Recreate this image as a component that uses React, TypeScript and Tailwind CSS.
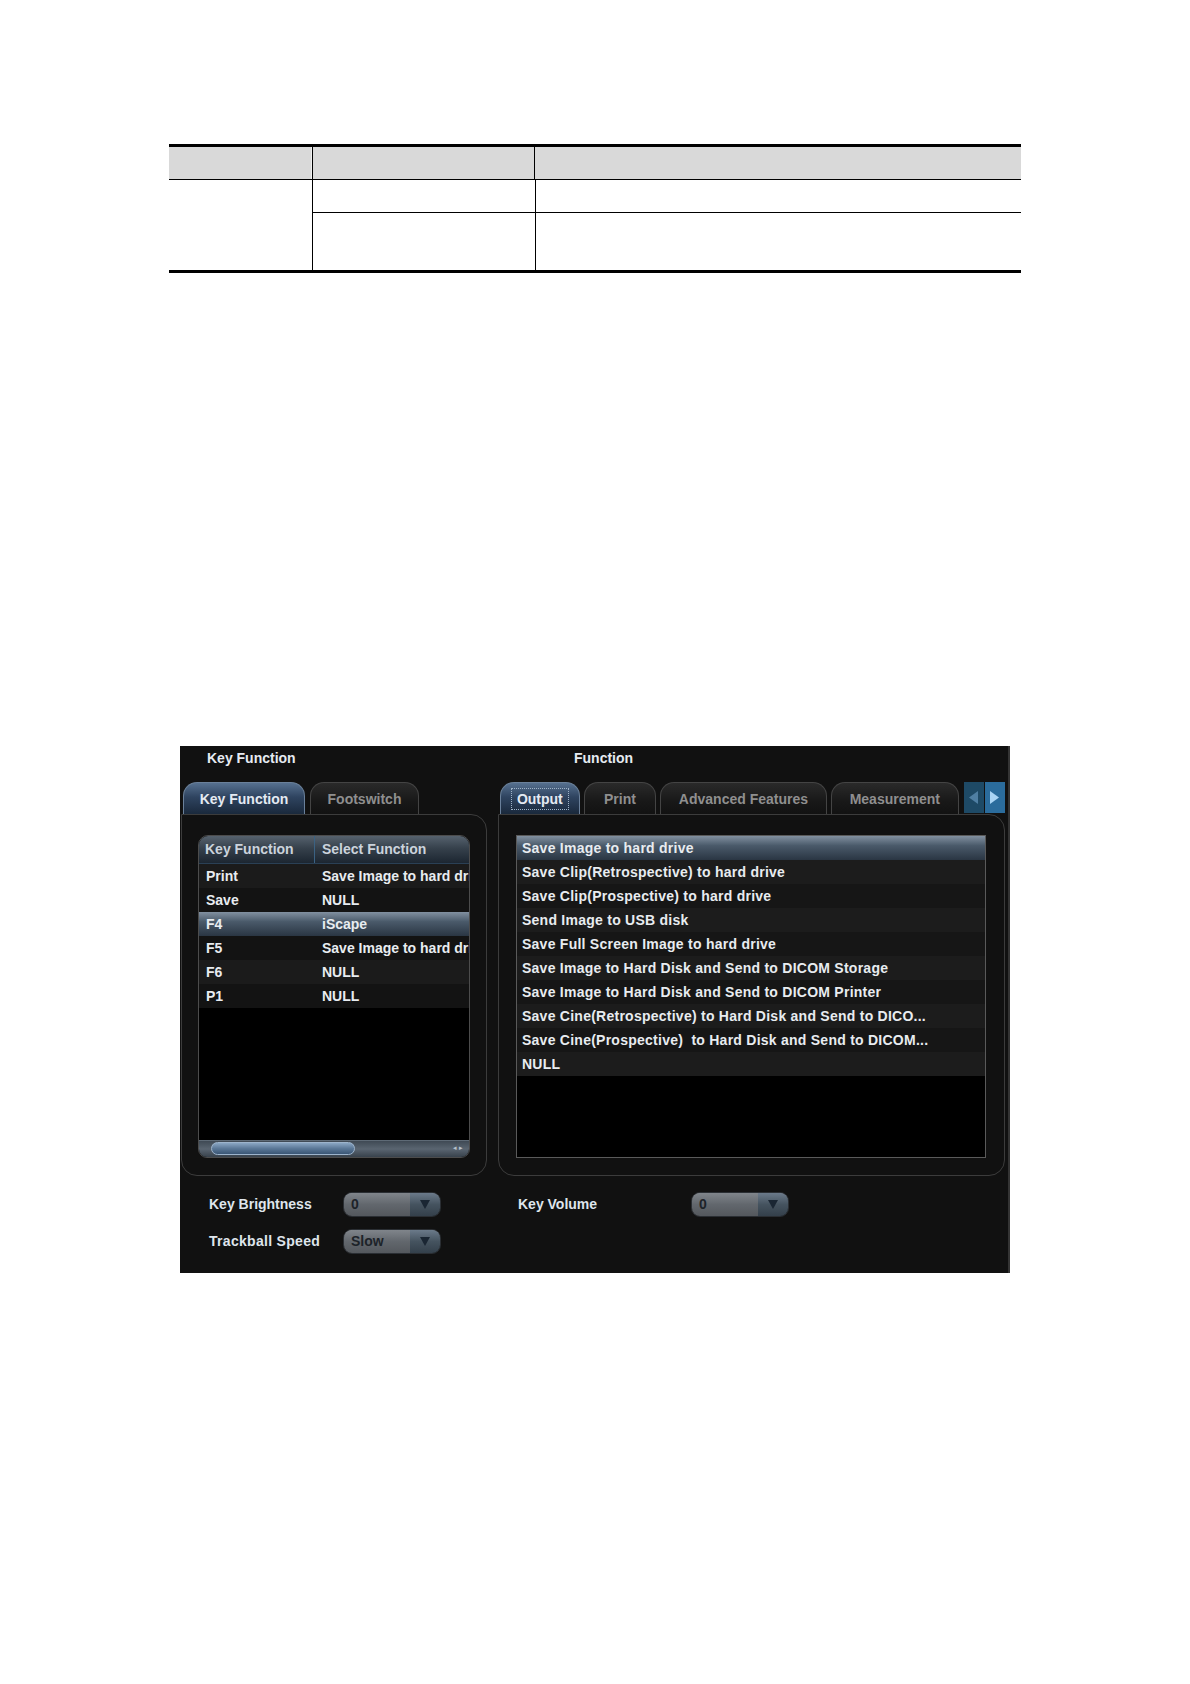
import React from "react";

const leftRows = [
  { k: "Print", v: "Save Image to hard drive" },
  { k: "Save", v: "NULL" },
  { k: "F4", v: "iScape", sel: true },
  { k: "F5", v: "Save Image to hard drive" },
  { k: "F6", v: "NULL" },
  { k: "P1", v: "NULL" },
];

const rightRows = [
  "Save Image to hard drive",
  "Save Clip(Retrospective) to hard drive",
  "Save Clip(Prospective) to hard drive",
  "Send Image to USB disk",
  "Save Full Screen Image to hard drive",
  "Save Image to Hard Disk and Send to DICOM Storage",
  "Save Image to Hard Disk and Send to DICOM Printer",
  "Save Cine(Retrospective) to Hard Disk and Send to DICO...",
  "Save Cine(Prospective)  to Hard Disk and Send to DICOM...",
  "NULL",
];

const SEL =
  "bg-[linear-gradient(to_bottom,#8190a0_0%,#4a5a6a_40%,#2a3643_100%)]";

function Tab({
  label,
  active,
  cls,
  focus,
}: {
  label: string;
  active?: boolean;
  cls: string;
  focus?: boolean;
}) {
  return (
    <div
      className={`h-[32px] flex items-center justify-center rounded-t-[14px] border border-b-0 text-[14px] font-bold ${cls} ${
        active
          ? "bg-[linear-gradient(to_bottom,#56708f_0%,#2f4460_45%,#1a293c_100%)] border-[#6a809a] text-[#e4eaf2]"
          : "bg-[linear-gradient(to_bottom,#2a2a2a_0%,#181818_60%,#121212_100%)] border-[#444] text-[#8f8f8f]"
      }`}
    >
      {focus ? (
        <span className="px-[5px] py-[2px] border border-dotted border-[#9fb3c8] leading-[16px]">
          {label}
        </span>
      ) : (
        <span className="leading-[16px]">{label}</span>
      )}
    </div>
  );
}

function Dropdown({ value }: { value: string }) {
  return (
    <div className="w-[98px] h-[25px] flex rounded-[9px] overflow-hidden border border-[#2a2e33] shadow-[inset_0_1px_0_#9aa0a6]">
      <div className="flex-1 flex items-center pl-[7px] bg-[linear-gradient(to_bottom,#80858b_0%,#62676d_50%,#54585d_100%)] text-[14px] font-bold text-[#1d2329]">
        {value}
      </div>
      <div className="w-[30px] flex items-center justify-center bg-[linear-gradient(to_bottom,#6b7a8a_0%,#45535f_50%,#34404b_100%)]">
        <svg width="10" height="9" viewBox="0 0 10 9">
          <path d="M0 0 H10 L5 9 Z" fill="#1a2633" />
        </svg>
      </div>
    </div>
  );
}

export default function App() {
  return (
    <div className="w-[1190px] min-h-[1684px] bg-white pt-[144px] font-['Liberation_Sans',Arial,sans-serif]">
      {/* top table */}
      <div className="ml-[169px] w-[852px] border-t-[3px] border-b-[3px] border-black">
        <div className="flex h-[33px] bg-[#d9d9d9] border-b border-black">
          <div className="w-[143px] border-r border-[#f0f0f0]" />
          <div className="w-[222px] border-l border-black" />
          <div className="flex-1 border-l border-black" />
        </div>
        <div className="flex">
          <div className="w-[143px]" />
          <div className="flex-1 flex flex-col border-l border-black">
            <div className="flex h-[33px] border-b border-black">
              <div className="w-[222px]" />
              <div className="flex-1 border-l border-black" />
            </div>
            <div className="flex h-[57px]">
              <div className="w-[222px]" />
              <div className="flex-1 border-l border-black" />
            </div>
          </div>
        </div>
      </div>

      {/* panel */}
      <div className="ml-[180px] mt-[473px] w-[830px] h-[527px] bg-[#111111] border-r-2 border-[#343434] flex flex-col text-[#e8ecf0]">
        <div className="flex h-[22px] items-center text-[14px] font-bold text-[#e6ebf2] mt-[1px]">
          <div className="w-[394px] pl-[27px]">Key Function</div>
          <div>Function</div>
        </div>

        <div className="flex mt-[13px] pl-[1px] gap-[11px]">
          {/* left column */}
          <div className="w-[306px] flex flex-col">
            <div className="flex h-[32px] pl-[2px] gap-[5px]">
              <Tab label="Key Function" active cls="w-[122px]" />
              <Tab label="Footswitch" cls="w-[109px]" />
            </div>
            <div className="h-[362px] border-[1.5px] border-[#3c3c3c] rounded-[16px] rounded-tl-none pt-[20px] pl-[16px]">
              <div className="w-[272px] h-[323px] border border-[#4c4c4c] rounded-t-[10px] rounded-b-[9px] bg-black flex flex-col overflow-hidden">
                <div className="h-[28px] flex shrink-0 bg-[linear-gradient(to_bottom,#56626e_0%,#36414c_45%,#1c2631_100%)] border-b border-[#2a4055] text-[14px] font-bold text-[#cbd3dc]">
                  <div className="w-[115px] shrink-0 pl-[6px] flex items-center">Key Function</div>
                  <div className="w-px shrink-0 bg-[#3b6283]" />
                  <div className="flex-1 pl-[7px] flex items-center whitespace-nowrap">Select Function</div>
                </div>
                {leftRows.map((r, i) => (
                  <div
                    key={r.k}
                    className={`h-[24px] shrink-0 flex items-center text-[14px] font-bold whitespace-nowrap overflow-hidden ${
                      r.sel ? SEL : i % 2 === 0 ? "bg-[#1b1b1b]" : "bg-[#131313]"
                    }`}
                  >
                    <div className="w-[116px] shrink-0 pl-[7px]">{r.k}</div>
                    <div className="flex-1 min-w-0 overflow-hidden pl-[7px]">{r.v}</div>
                  </div>
                ))}
                <div className="flex-1" />
                <div className="h-[17px] shrink-0 relative bg-[linear-gradient(to_bottom,#3f4954_0%,#5a6571_50%,#38424c_100%)] border-t border-[#5e6a76]">
                  <div className="absolute left-[12px] top-[1px] w-[144px] h-[13px] rounded-full border border-[#9db4cc] bg-[linear-gradient(to_bottom,#8aa6c3_0%,#5b7897_50%,#3a5675_100%)]" />
                  <div className="absolute right-[6px] top-[2px] text-[7px] leading-[10px] text-[#b8c2cc]">◂ ▸</div>
                </div>
              </div>
            </div>
          </div>

          {/* right column */}
          <div className="w-[507px] flex flex-col">
            <div className="flex h-[32px] pl-[2px] gap-[4px] items-end">
              <Tab label="Output" active focus cls="w-[80px]" />
              <Tab label="Print" cls="w-[73px]" />
              <Tab label="Advanced Features" cls="w-[167px]" />
              <Tab label="Measurement" cls="w-[129px]" />
              <div className="flex self-start ml-[1px] gap-[1px]">
                <div className="w-[20px] h-[31px] bg-[#1e4a66] flex items-center justify-center">
                  <svg width="9" height="13" viewBox="0 0 9 13">
                    <path d="M9 0 V13 L0 6.5 Z" fill="#4f7fa3" />
                  </svg>
                </div>
                <div className="w-[20px] h-[31px] bg-[#2b6c9c] flex items-center justify-center">
                  <svg width="9" height="13" viewBox="0 0 9 13">
                    <path d="M0 0 V13 L9 6.5 Z" fill="#a9d4f4" />
                  </svg>
                </div>
              </div>
            </div>
            <div className="h-[362px] border-[1.5px] border-[#3c3c3c] rounded-[16px] rounded-tl-none pt-[20px] pl-[17px]">
              <div className="w-[470px] h-[323px] border border-[#5a5a5a] bg-black flex flex-col overflow-hidden">
                {rightRows.map((t, i) => (
                  <div
                    key={t}
                    className={`h-[24px] shrink-0 flex items-center pl-[5px] text-[14px] font-bold tracking-[0.25px] whitespace-pre ${
                      i === 0 ? SEL : i % 2 === 1 ? "bg-[#1c1c1c]" : "bg-[#161616]"
                    }`}
                  >
                    {t}
                  </div>
                ))}
              </div>
            </div>
          </div>
        </div>

        {/* bottom controls */}
        <div className="mt-[16px] flex flex-col gap-[12px] text-[14px] font-bold text-[#dfe5ec]">
          <div className="flex items-center">
            <div className="w-[163px] pl-[29px]">Key Brightness</div>
            <Dropdown value="0" />
            <div className="w-[250px] pl-[77px]">Key Volume</div>
            <Dropdown value="0" />
          </div>
          <div className="flex items-center">
            <div className="w-[163px] pl-[29px] tracking-[0.3px]">Trackball Speed</div>
            <Dropdown value="Slow" />
          </div>
        </div>
      </div>
    </div>
  );
}
